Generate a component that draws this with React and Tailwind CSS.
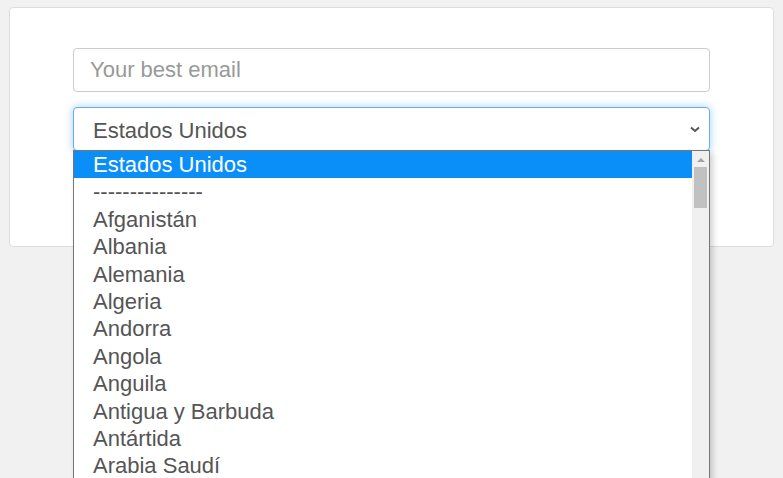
import React from 'react'

const countries = [
  'Afganistán',
  'Albania',
  'Alemania',
  'Algeria',
  'Andorra',
  'Angola',
  'Anguila',
  'Antigua y Barbuda',
  'Antártida',
  'Arabia Saudí',
  'Argelia',
]

export default function App() {
  return (
    <div className="relative h-[478px] w-full overflow-hidden bg-[#f1f1f1] pt-[7px] pl-[9px] pr-[9px] font-['Liberation_Sans',Arial,sans-serif]">
      <div className="h-[240px] rounded-[4px] border border-[#dddddd] bg-white px-[63px] pt-[40px]">
        <input
          className="block h-[44px] w-full rounded-[4px] border border-[#cccccc] bg-white px-[16px] text-[22px] text-[#555] placeholder:text-[#999] outline-none"
          placeholder="Your best email"
        />
        <div className="mt-[15px] flex h-[44px] w-full items-center justify-between rounded-[4px] border border-[#66afe9] bg-white pl-[19px] pr-[9px] text-[22px] text-[#555] shadow-[0_0_8px_rgba(102,175,233,0.6)]">
          <span className="pt-[3px]">Estados Unidos</span>
          <svg width="10" height="7" viewBox="0 0 10 7">
            <path d="M1 1.5 L5 5 L9 1.5" fill="none" stroke="#555" strokeWidth="2" />
          </svg>
        </div>
      </div>

      {/* native option list */}
      <div className="absolute left-[73px] top-[150px] flex h-[340px] w-[637px] border border-[#767676] bg-white shadow-[3px_3px_6px_rgba(0,0,0,0.18)]">
        <div className="flex-1 text-[22px] leading-[27.4px] text-[#555]">
          <div className="bg-[#0a8ef8] pl-[19px] text-white">Estados Unidos</div>
          <div className="pl-[19px]">---------------</div>
          {countries.map(c => (
            <div key={c} className="pl-[19px]">{c}</div>
          ))}
        </div>
        <div className="flex w-[17px] flex-col items-center bg-[#f0f0f0]">
          <svg width="8" height="6" viewBox="0 0 8 6" className="mt-[6px]">
            <path d="M0 5 L4 1 L8 5 Z" fill="#a3a3a3" />
          </svg>
          <div className="mt-[4px] h-[41px] w-[13px] bg-[#c1c1c1]" />
        </div>
      </div>
    </div>
  )
}
